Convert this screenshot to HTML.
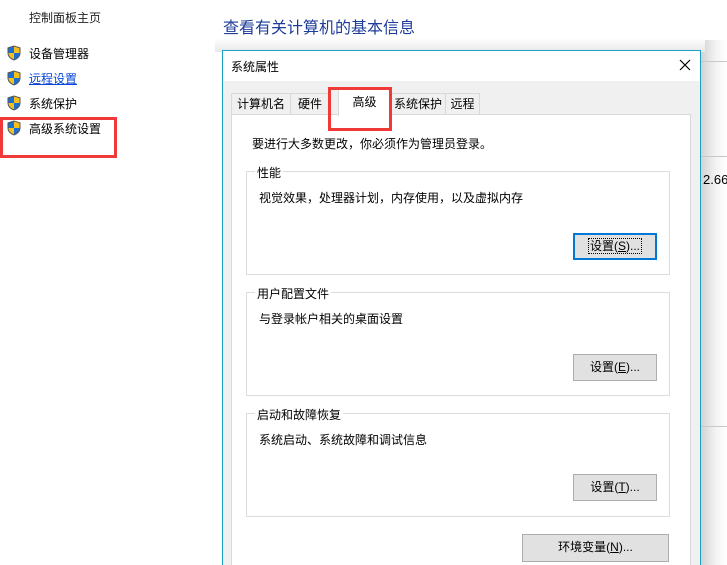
<!DOCTYPE html>
<html><head><meta charset="utf-8"><style>
*{margin:0;padding:0;box-sizing:border-box}
html,body{width:727px;height:565px;overflow:hidden}
body{background:#fff;position:relative;font-family:"Liberation Sans","Noto Sans CJK SC",sans-serif;font-size:12px;color:#000}
.a{position:absolute;white-space:nowrap}
.sh{position:absolute;left:7px;width:14px;height:16px}
.btn{position:absolute;background:#e1e1e1;border:1px solid #adadad;text-align:center;line-height:24px;font-size:12px}
.grp{position:absolute;left:246px;width:424px;height:104px;border:1px solid #dcdcdc}
.gl{position:absolute;left:255px;background:#fff;padding:0 2px;font-size:12px}
.tab{position:absolute;top:93px;height:22px;border:1px solid #d9d9d9;border-bottom:none;background:#f0f0f0;line-height:20px;text-align:center;font-size:12px}
</style></head><body>
<div class="a" style="left:29px;top:9px;color:#222">控制面板主页</div>
<svg class="sh" style="top:45px" viewBox="0 0 14 16"><path d="M7 0.5 L13.5 2.5 V8 C13.5 12 10 14.5 7 15.5 C4 14.5 0.5 12 0.5 8 V2.5Z" fill="#555"/><path d="M7 1.5V8H1.5V3.2Z" fill="#1a6fd0"/><path d="M7 1.5L12.5 3.2V8H7Z" fill="#f4c020"/><path d="M1.5 8H7V14.3C4.3 13.2 1.5 11.3 1.5 8Z" fill="#f4c020"/><path d="M7 8H12.5C12.5 11.3 9.7 13.2 7 14.3Z" fill="#1a6fd0"/></svg>
<div class="a" style="left:29px;top:45px">设备管理器</div>
<svg class="sh" style="top:70px" viewBox="0 0 14 16"><path d="M7 0.5 L13.5 2.5 V8 C13.5 12 10 14.5 7 15.5 C4 14.5 0.5 12 0.5 8 V2.5Z" fill="#555"/><path d="M7 1.5V8H1.5V3.2Z" fill="#1a6fd0"/><path d="M7 1.5L12.5 3.2V8H7Z" fill="#f4c020"/><path d="M1.5 8H7V14.3C4.3 13.2 1.5 11.3 1.5 8Z" fill="#f4c020"/><path d="M7 8H12.5C12.5 11.3 9.7 13.2 7 14.3Z" fill="#1a6fd0"/></svg>
<div class="a" style="left:29px;top:70px;color:#0645d8;text-decoration:underline">远程设置</div>
<svg class="sh" style="top:95px" viewBox="0 0 14 16"><path d="M7 0.5 L13.5 2.5 V8 C13.5 12 10 14.5 7 15.5 C4 14.5 0.5 12 0.5 8 V2.5Z" fill="#555"/><path d="M7 1.5V8H1.5V3.2Z" fill="#1a6fd0"/><path d="M7 1.5L12.5 3.2V8H7Z" fill="#f4c020"/><path d="M1.5 8H7V14.3C4.3 13.2 1.5 11.3 1.5 8Z" fill="#f4c020"/><path d="M7 8H12.5C12.5 11.3 9.7 13.2 7 14.3Z" fill="#1a6fd0"/></svg>
<div class="a" style="left:29px;top:95px">系统保护</div>
<svg class="sh" style="top:120px" viewBox="0 0 14 16"><path d="M7 0.5 L13.5 2.5 V8 C13.5 12 10 14.5 7 15.5 C4 14.5 0.5 12 0.5 8 V2.5Z" fill="#555"/><path d="M7 1.5V8H1.5V3.2Z" fill="#1a6fd0"/><path d="M7 1.5L12.5 3.2V8H7Z" fill="#f4c020"/><path d="M1.5 8H7V14.3C4.3 13.2 1.5 11.3 1.5 8Z" fill="#f4c020"/><path d="M7 8H12.5C12.5 11.3 9.7 13.2 7 14.3Z" fill="#1a6fd0"/></svg>
<div class="a" style="left:29px;top:120px">高级系统设置</div>
<div class="a" style="left:0;top:117px;width:117px;height:41px;border:3px solid #f03a3a"></div>

<div class="a" style="left:223px;top:14px;font-size:16px;color:#1e3c9a">查看有关计算机的基本信息</div>
<div class="a" style="left:700px;top:40px;width:27px;height:525px;background:linear-gradient(90deg,#d0d0d0,#f4f4f4 60%,#fff)"></div>
<div class="a" style="left:700px;top:61px;width:27px;height:1px;background:#c8c8c8"></div>
<div class="a" style="left:700px;top:156px;width:27px;height:1px;background:#c8c8c8"></div>
<div class="a" style="left:700px;top:426px;width:27px;height:1px;background:#c8c8c8"></div>
<div class="a" style="left:703px;top:172px;font-size:13px">2.66</div>
<div class="a" style="left:215px;top:38px;width:490px;height:14px;background:linear-gradient(180deg,#fff,#e8e8e8)"></div>

<div class="a" style="left:222px;top:50px;width:479px;height:520px;border:1px solid #1aa0c4;background:#f0f0f0"></div>
<div class="a" style="left:223px;top:51px;width:477px;height:30px;background:#fff"></div>
<div class="a" style="left:231px;top:58px">系统属性</div>
<svg class="a" style="left:679px;top:59px" width="12" height="12" viewBox="0 0 12 12"><path d="M1 1L11 11M11 1L1 11" stroke="#000" stroke-width="1.2"/></svg>

<div class="tab" style="left:231px;width:60px">计算机名</div>
<div class="tab" style="left:290px;width:40px">硬件</div>
<div class="tab" style="left:390px;width:56px">系统保护</div>
<div class="tab" style="left:445px;width:35px">远程</div>
<div class="a" style="left:231px;top:114px;width:460px;height:460px;background:#fff;border:1px solid #d9d9d9"></div>
<div class="tab" style="left:338px;top:89px;width:53px;height:27px;background:#fff;line-height:24px">高级</div>
<div class="a" style="left:328px;top:87px;width:64px;height:44px;border:3px solid #f03a3a"></div>

<div class="a" style="left:252px;top:135px">要进行大多数更改，你必须作为管理员登录。</div>

<div class="grp" style="top:171px"></div><div class="gl" style="top:164px">性能</div>
<div class="a" style="left:259px;top:189px">视觉效果，处理器计划，内存使用，以及虚拟内存</div>
<div class="btn" style="left:573px;top:233px;width:84px;height:27px;border:2px solid #0078d7;line-height:22px"><span style="outline:1px dotted #000;padding:0 1px">设置(<u>S</u>)...</span></div>

<div class="grp" style="top:292px"></div><div class="gl" style="top:285px">用户配置文件</div>
<div class="a" style="left:259px;top:310px">与登录帐户相关的桌面设置</div>
<div class="btn" style="left:573px;top:354px;width:84px;height:27px">设置(<u>E</u>)...</div>

<div class="grp" style="top:413px"></div><div class="gl" style="top:406px">启动和故障恢复</div>
<div class="a" style="left:259px;top:431px">系统启动、系统故障和调试信息</div>
<div class="btn" style="left:573px;top:474px;width:84px;height:27px">设置(<u>T</u>)...</div>

<div class="btn" style="left:522px;top:534px;width:147px;height:28px">环境变量(<u>N</u>)...</div>
</body></html>
